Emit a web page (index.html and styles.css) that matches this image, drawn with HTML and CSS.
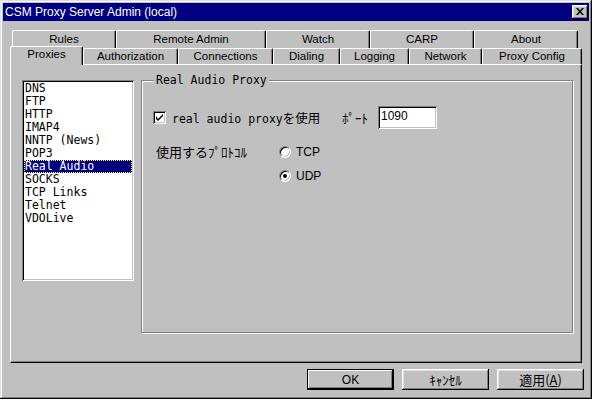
FILE: index.html
```html
<!DOCTYPE html>
<html lang="ja">
<head>
  <meta charset="UTF-8">
  <title>CSM Proxy Server Admin (local)</title>
  <link rel="stylesheet" href="styles.css">
</head>
<body>
  <div class="window">
    <div class="titlebar">
      <span class="title">CSM Proxy Server Admin (local)</span>
      <span class="close">
        <svg width="8" height="7" viewBox="0 0 8 7"><path d="M0 0h2l2 2.5L6 0h2L5 3.5 8 7H6L4 4.5 2 7H0l3-3.5z" fill="#000"/></svg>
      </span>
    </div>

    <div class="tab-row back">
      <div class="tab">Rules</div>
      <div class="tab">Remote Admin</div>
      <div class="tab">Watch</div>
      <div class="tab">CARP</div>
      <div class="tab">About</div>
    </div>
    <div class="tab-row front">
      <div class="tab active">Proxies</div>
      <div class="tab">Authorization</div>
      <div class="tab">Connections</div>
      <div class="tab">Dialing</div>
      <div class="tab">Logging</div>
      <div class="tab">Network</div>
      <div class="tab">Proxy Config</div>
    </div>

    <div class="panel">
      <ul class="listbox">
        <li>DNS</li>
        <li>FTP</li>
        <li>HTTP</li>
        <li>IMAP4</li>
        <li>NNTP (News)</li>
        <li>POP3</li>
        <li class="selected">Real Audio</li>
        <li>SOCKS</li>
        <li>TCP Links</li>
        <li>Telnet</li>
        <li>VDOLive</li>
      </ul>

      <div class="group">
        <span class="legend">Real Audio Proxy</span>
        <div class="opt-row">
          <span class="check">
            <svg width="7" height="7" viewBox="0 0 7 7"><path d="M0 2v3l2 2 5-5V0L2 5z" fill="#000"/></svg>
          </span>
          <span class="check-label">real audio proxy<span class="jp">を使用</span></span>
          <span class="port-label">ﾎﾟｰﾄ</span>
          <span class="field">1090</span>
        </div>
        <div class="proto">
          <span class="proto-label">使用するﾌﾟﾛﾄｺﾙ</span>
          <div class="radios">
            <div class="radio-row"><span class="radio"></span>TCP</div>
            <div class="radio-row"><span class="radio on"></span>UDP</div>
          </div>
        </div>
      </div>
    </div>

    <div class="buttons">
      <span class="btn default">OK</span>
      <span class="btn jp">ｷｬﾝｾﾙ</span>
      <span class="btn jp">適用(<u>A</u>)</span>
    </div>
  </div>
</body>
</html>
```

FILE: styles.css
```css
body {
  margin: 0;
  font-family: "Liberation Sans", "Noto Sans CJK JP", sans-serif;
  font-size: 12px;
  color: #000;
}
.window {
  width: 592px;
  height: 399px;
  box-sizing: border-box;
  padding: 3px;
  background: #c0c0c0;
  box-shadow: inset -1px -1px #000, inset 1px 1px #dfdfdf, inset -2px -2px #808080, inset 2px 2px #fff;
}
.titlebar {
  height: 18px;
  background: #000080;
  color: #fff;
  display: flex;
  align-items: center;
  justify-content: space-between;
  padding: 0 1px 0 2px;
}
.close {
  width: 16px;
  height: 14px;
  background: #c0c0c0;
  display: flex;
  align-items: center;
  justify-content: center;
  box-shadow: inset -1px -1px #000, inset 1px 1px #fff, inset -2px -2px #808080, inset 2px 2px #dfdfdf;
}
.close svg {
  margin: 0 0 1px 0;
}

/* tabs */
.tab-row {
  display: grid;
}
.tab-row.back {
  margin: 9px 0 0 9px;
  grid-template-columns: 104px 150px 104px 104px 104px;
  height: 18px;
}
.tab-row.front {
  margin-left: 7px;
  grid-template-columns: 73px 95px 95px 67px 69px 73px 100px;
  height: 16px;
  align-items: start;
}
.tab {
  box-sizing: border-box;
  height: 18px;
  line-height: 16px;
  font-size: 11.5px;
  text-align: center;
  background: #c0c0c0;
  border-top: 1px solid #fff;
  border-left: 1px solid #fff;
  border-right: 1px solid #000;
  border-radius: 2px 2px 0 0;
  box-shadow: inset -1px 0 #808080;
}
.front .tab {
  height: 16px;
  line-height: 15px;
}
.front .tab.active {
  position: relative;
  z-index: 1;
  height: 19px;
  margin-top: -2px;
}

/* page */
.panel {
  margin-left: 7px;
  width: 572px;
  height: 299px;
  box-sizing: border-box;
  padding: 15px 0 0 11px;
  border-top: 1px solid #fff;
  border-left: 1px solid #fff;
  border-right: 1px solid #000;
  border-bottom: 1px solid #000;
  box-shadow: inset -1px -1px #808080;
  display: flex;
  align-items: flex-start;
  gap: 7px;
}
.listbox {
  list-style: none;
  margin: 0;
  padding: 2px;
  width: 112px;
  height: 201px;
  box-sizing: border-box;
  background: #fff;
  box-shadow: inset 1px 1px #808080, inset -1px -1px #fff, inset 2px 2px #000, inset -2px -2px #c0c0c0;
  font-family: "DejaVu Sans Mono", monospace;
  font-size: 11.5px;
  line-height: 13px;
}
.listbox li {
  padding-left: 1px;
  white-space: pre;
}
.listbox li.selected {
  background: #000080;
  color: #fff;
  outline: 1px dotted #ffff80;
  outline-offset: -1px;
}

.group {
  position: relative;
  width: 432px;
  height: 253px;
  box-sizing: border-box;
  border: 1px solid #808080;
  box-shadow: inset 1px 1px #fff, 1px 1px #fff;
  padding: 25px 0 0 11px;
}
.legend {
  position: absolute;
  top: -8px;
  left: 12px;
  padding: 0 2px;
  line-height: 14px;
  background: #c0c0c0;
  font-family: "DejaVu Sans Mono", monospace;
  font-size: 11.5px;
}
.opt-row {
  display: flex;
  align-items: center;
  height: 23px;
}
.check {
  width: 13px;
  height: 13px;
  box-sizing: border-box;
  background: #fff;
  box-shadow: inset 1px 1px #808080, inset -1px -1px #fff, inset 2px 2px #000, inset -2px -2px #c0c0c0;
  display: flex;
  align-items: center;
  justify-content: center;
  margin-right: 6px;
}
.check-label {
  width: 170px;
  font-family: "DejaVu Sans Mono", "Noto Sans CJK JP", monospace;
  font-size: 11.5px;
}
.jp {
  font-family: "Noto Sans CJK JP", sans-serif;
  font-size: 13px;
}
.check-label .jp {
  font-size: 12.5px;
}
.port-label {
  width: 36px;
  font-family: "Noto Sans CJK JP", sans-serif;
  font-size: 13px;
}
.field {
  width: 59px;
  height: 23px;
  box-sizing: border-box;
  padding: 2px 0 0 3px;
  line-height: 16px;
  background: #fff;
  box-shadow: inset 1px 1px #808080, inset -1px -1px #fff, inset 2px 2px #000, inset -2px -2px #c0c0c0;
}
.proto {
  display: flex;
  margin-top: 16px;
}
.proto-label {
  width: 126px;
  box-sizing: border-box;
  padding-left: 3px;
  line-height: 14px;
  font-family: "Noto Sans CJK JP", sans-serif;
  font-size: 13px;
}
.radios {
  display: flex;
  flex-direction: column;
  gap: 10px;
}
.radio-row {
  height: 14px;
  display: flex;
  align-items: center;
  gap: 5px;
}
.radio {
  width: 12px;
  height: 12px;
  box-sizing: border-box;
  border-radius: 50%;
  background: #fff;
  border: 1px solid;
  border-color: #808080 #fff #fff #808080;
  box-shadow: inset 1px 1px #000, inset -1px -1px #c0c0c0;
  display: flex;
  align-items: center;
  justify-content: center;
}
.radio.on::after {
  content: "";
  width: 4px;
  height: 4px;
  border-radius: 50%;
  background: #000;
}

/* dialog buttons */
.buttons {
  display: flex;
  justify-content: flex-end;
  gap: 8px;
  margin: 6px 5px 0 0;
}
.btn {
  width: 87px;
  height: 21px;
  box-sizing: border-box;
  display: flex;
  align-items: center;
  justify-content: center;
  box-shadow: inset -1px -1px #000, inset 1px 1px #fff, inset -2px -2px #808080, inset 2px 2px #dfdfdf;
}
.btn.default {
  border: 1px solid #000;
  box-shadow: inset -1px -1px #000, inset 1px 1px #fff, inset -2px -2px #808080;
}
```
